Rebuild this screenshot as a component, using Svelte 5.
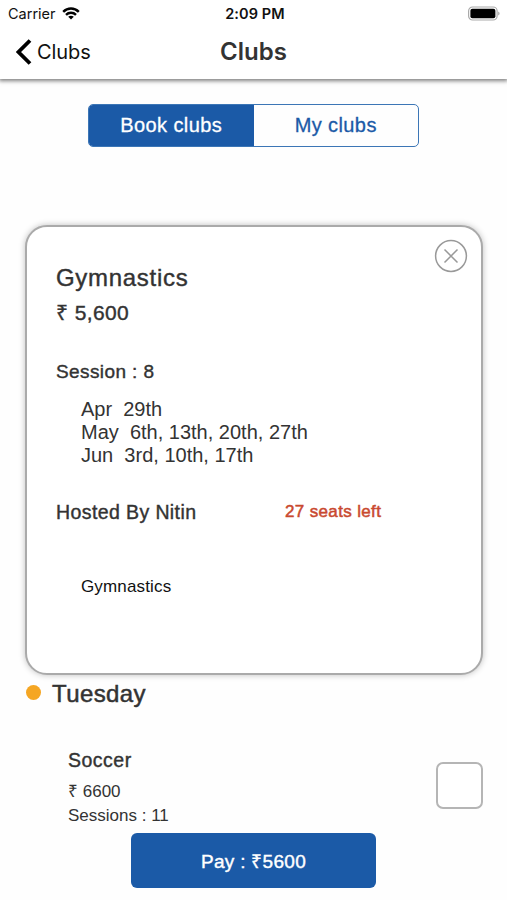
<script lang="ts">
  interface SessionMonth {
    month: string;
    days: string;
  }

  const tabs = ['Book clubs', 'My clubs'];

  const months: SessionMonth[] = [
    { month: 'Apr', days: '29th' },
    { month: 'May', days: '6th, 13th, 20th, 27th' },
    { month: 'Jun', days: '3rd, 10th, 17th' }
  ];

  let activeTab = $state(0);
  let selected = $state(false);
</script>

<div class="screen">
  <header>
    <div class="status-bar">
      <div class="carrier">
        <span>Carrier</span>
        <svg viewBox="0 0 18 13" width="18" height="13">
          <g fill="none" stroke="#000" stroke-width="2.4">
            <path d="M1.2 4.9C5.6 .4 12.4 .4 16.8 4.9" />
            <path d="M4 7.8C6.8 5 11.2 5 14 7.8" />
          </g>
          <path d="M6.2 9.8C7.8 8.3 10.2 8.3 11.8 9.8L9 12.6z" />
        </svg>
      </div>
      <span class="time">2:09 PM</span>
      <svg class="battery" viewBox="0 0 33 15" width="33" height="15">
        <rect x="1.6" y="1" width="28.5" height="13" rx="4" fill="#fff" stroke="#aaa" stroke-width="1.2" />
        <rect x="3.4" y="2.8" width="25" height="9.4" rx="2" />
        <path d="M31.3 5.5c1.6.6 1.6 3.4 0 4z" fill="#999" />
      </svg>
    </div>
    <div class="nav-bar">
      <button class="back">
        <svg viewBox="0 0 16 26" width="16" height="26">
          <path d="M14 1.5L2.5 13L14 24.5" fill="none" stroke="#000" stroke-width="3.8" />
        </svg>
        <span>Clubs</span>
      </button>
      <h1>Clubs</h1>
    </div>
  </header>

  <div class="segments">
    {#each tabs as tab, i}
      <button class="segment" class:active={activeTab === i} onclick={() => (activeTab = i)}>{tab}</button>
    {/each}
  </div>

  <section class="card">
    <button class="close" aria-label="Close">
      <svg viewBox="0 0 34 34" width="34" height="34">
        <g fill="none" stroke="#999" stroke-width="1.5">
          <circle cx="17" cy="17" r="15.4" />
          <path d="M10.5 10.5l13 13M23.5 10.5l-13 13" />
        </g>
      </svg>
    </button>
    <h2>Gymnastics</h2>
    <p class="price">₹ 5,600</p>
    <p class="session">Session : 8</p>
    <div class="dates">
      {#each months as m}
        <div class="date-row">{m.month}&nbsp; {m.days}</div>
      {/each}
    </div>
    <div class="host-row">
      <span class="host">Hosted By Nitin</span>
      <span class="seats">27 seats left</span>
    </div>
    <p class="description">Gymnastics</p>
  </section>

  <div class="day">
    <span class="dot"></span>
    <h2>Tuesday</h2>
  </div>

  <div class="club">
    <div class="club-info">
      <h3>Soccer</h3>
      <p>₹ 6600</p>
      <p>Sessions : 11</p>
    </div>
    <button class="checkbox" class:selected aria-label="Select Soccer" onclick={() => (selected = !selected)}></button>
  </div>

  <button class="pay">Pay : ₹5600</button>
</div>

<style>
  :global(body) {
    margin: 0;
    background: #fefefe;
  }

  .screen {
    display: flex;
    flex-direction: column;
    box-sizing: border-box;
    width: 507px;
    height: 900px;
    overflow: hidden;
    background: #fefefe;
    color: #333;
    font-family: 'Liberation Sans', Arial, sans-serif;
  }

  h1,
  h2,
  h3,
  p {
    margin: 0;
    font-weight: normal;
  }

  button {
    padding: 0;
    border: none;
    background: transparent;
    color: inherit;
    font-family: inherit;
    cursor: pointer;
  }

  header {
    height: 79px;
    flex-shrink: 0;
    background: #fff;
    box-shadow: 0 1px 4px 1px rgba(0, 0, 0, 0.5);
    font-family: Inter, sans-serif;
  }

  .status-bar,
  .nav-bar {
    display: grid;
    grid-template-columns: 1fr auto 1fr;
    align-items: center;
  }

  .status-bar {
    height: 27px;
    padding: 0 7px 0 8px;
    color: #111;
    font-size: 14.5px;
  }

  .carrier {
    display: flex;
    align-items: center;
    gap: 6px;
  }

  .time {
    padding-left: 2px;
    font-size: 14.5px;
    font-weight: 600;
    letter-spacing: 0.1px;
  }

  .battery {
    justify-self: end;
  }

  .nav-bar {
    height: 50px;
    padding: 0 16px;
  }

  .back {
    display: flex;
    align-items: center;
    gap: 5px;
    color: #111;
    font-size: 20px;
    letter-spacing: -0.1px;
  }

  h1 {
    padding-bottom: 2px;
    font-size: 24px;
    font-weight: 600;
  }

  .segments {
    display: flex;
    flex-shrink: 0;
    box-sizing: border-box;
    width: 331px;
    height: 43px;
    margin: 25px 0 0 88px;
    border: 1px solid #3c76b6;
    border-radius: 5px;
    overflow: hidden;
  }

  .segment {
    flex: 1;
    color: #1b5aa7;
    font-size: 20px;
    letter-spacing: 0.4px;
    -webkit-text-stroke: 0.3px currentColor;
  }

  .segment.active {
    background: #1b5aa7;
    color: #fff;
  }

  .card {
    position: relative;
    flex-shrink: 0;
    box-sizing: border-box;
    width: 458px;
    height: 450px;
    margin: 78px 0 0 25px;
    padding: 36px 29px 0;
    border: 2px solid #aaa;
    border-radius: 22px;
    background: #fff;
    box-shadow: 0 0 6px rgba(0, 0, 0, 0.25);
  }

  .close {
    position: absolute;
    top: 12px;
    right: 13px;
    width: 34px;
    height: 34px;
  }

  .card h2 {
    font-size: 24px;
    line-height: 30px;
    letter-spacing: 0.7px;
    -webkit-text-stroke: 0.4px currentColor;
  }

  .price {
    margin-top: 7px;
    font-size: 21px;
    line-height: 26px;
    letter-spacing: 0.4px;
    -webkit-text-stroke: 0.4px currentColor;
  }

  .session {
    margin-top: 34px;
    font-size: 19px;
    line-height: 24px;
    letter-spacing: 0.4px;
    -webkit-text-stroke: 0.4px currentColor;
  }

  .dates {
    margin: 14px 0 0 25px;
    font-size: 20px;
    line-height: 23px;
  }

  .host-row {
    display: grid;
    grid-template-columns: 229px auto;
    align-items: center;
    height: 26px;
    margin-top: 32px;
  }

  .host {
    font-size: 19.5px;
    letter-spacing: 0.4px;
    -webkit-text-stroke: 0.4px currentColor;
  }

  .seats {
    color: #c9492f;
    font-size: 17px;
    letter-spacing: 0.35px;
    -webkit-text-stroke: 0.5px currentColor;
  }

  .description {
    margin: 52px 0 0 25px;
    color: #111;
    font-size: 17px;
    line-height: 20px;
    letter-spacing: 0.15px;
  }

  .day {
    display: flex;
    align-items: center;
    gap: 11px;
    height: 30px;
    margin: 4px 0 0 26px;
  }

  .dot {
    width: 15px;
    height: 15px;
    margin-bottom: 4px;
    border-radius: 50%;
    background: #f5a623;
  }

  .day h2 {
    font-size: 24px;
    letter-spacing: 0.4px;
    -webkit-text-stroke: 0.5px currentColor;
  }

  .club {
    display: flex;
    justify-content: space-between;
    align-items: center;
    margin: 39px 24px 0 68px;
  }

  .club-info h3 {
    margin-bottom: 8px;
    font-size: 19.5px;
    line-height: 24px;
    letter-spacing: 0.5px;
    -webkit-text-stroke: 0.4px currentColor;
  }

  .club-info p {
    font-size: 17px;
    line-height: 24px;
  }

  .checkbox {
    box-sizing: border-box;
    width: 47px;
    height: 47px;
    margin-bottom: 5px;
    border: 2px solid #b5b5b5;
    border-radius: 7px;
    background: #fff;
  }

  .checkbox.selected {
    background: #1b5aa7;
  }

  .pay {
    flex-shrink: 0;
    width: 245px;
    height: 55px;
    margin: 5px 0 0 131px;
    border-radius: 6px;
    background: #1b5aa7;
    color: #fff;
    font-size: 19px;
    letter-spacing: 0.3px;
    -webkit-text-stroke: 0.4px currentColor;
  }
</style>
